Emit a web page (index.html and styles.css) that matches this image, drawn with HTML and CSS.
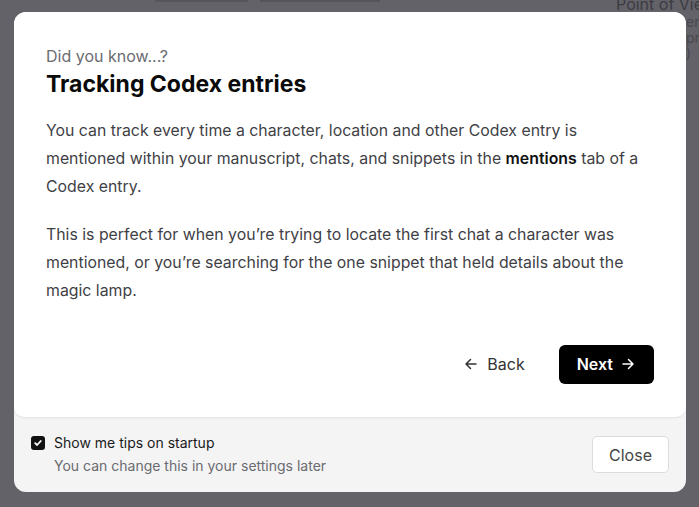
FILE: index.html
```html
<!DOCTYPE html>
<html lang="en">
<head>
    <meta charset="UTF-8">
    <title>Did you know</title>
    <link rel="stylesheet" href="styles.css">
</head>
<body>
    <div class="backdrop">
        <div class="bg-tabs">
            <span class="bg-tab first"></span>
            <span class="bg-tab second"></span>
        </div>
        <div class="bg-side">
            <div class="bg-title">Point of View</div>
            <div class="bg-line">en</div>
            <div class="bg-line">pr</div>
            <div class="bg-line">)</div>
        </div>
    </div>

    <div class="overlay">
        <div class="modal">
            <div class="card">
                <div class="eyebrow">Did you know...?</div>
                <h1>Tracking Codex entries</h1>
                <p>You can track every time a character, location and other Codex entry is mentioned within your manuscript, chats, and snippets in the <strong>mentions</strong> tab of a Codex entry.</p>
                <p>This is perfect for when you’re trying to locate the first chat a character was mentioned, or you’re searching for the one snippet that held details about the magic lamp.</p>

                <div class="actions">
                    <button class="btn-back">
                        <svg width="16" height="16" viewBox="0 0 16 16" fill="none" stroke="currentColor" stroke-width="1.5" stroke-linecap="round" stroke-linejoin="round"><path d="M13 8H3M7.5 3.5L3 8l4.5 4.5"/></svg>
                        Back
                    </button>
                    <button class="btn-next">
                        Next
                        <svg width="16" height="16" viewBox="0 0 16 16" fill="none" stroke="currentColor" stroke-width="1.5" stroke-linecap="round" stroke-linejoin="round"><path d="M3 8h10M8.5 3.5L13 8l-4.5 4.5"/></svg>
                    </button>
                </div>
            </div>

            <div class="footer">
                <label class="tips">
                    <span class="check">
                        <svg width="10" height="10" viewBox="0 0 10 10" fill="none" stroke="#fff" stroke-width="1.8" stroke-linecap="round" stroke-linejoin="round"><path d="M2.2 5.2l1.9 1.8 3.7-4"/></svg>
                    </span>
                    <span class="tips-text">
                        <span class="tips-title">Show me tips on startup</span>
                        <span class="tips-hint">You can change this in your settings later</span>
                    </span>
                </label>
                <button class="btn-close">Close</button>
            </div>
        </div>
    </div>
</body>
</html>
```

FILE: styles.css
```css
* {
    box-sizing: border-box;
}

html, body {
    margin: 0;
    height: 100%;
}

body {
    font-family: Inter, "Noto Sans", sans-serif;
    background-color: #636269;
    overflow: hidden;
}

/* faint page behind the dimmed overlay */
.backdrop {
    position: absolute;
    inset: 0;
    overflow: hidden;
}

.bg-tabs {
    position: absolute;
    top: 0;
    left: 155px;
    display: flex;
    gap: 12px;
}

.bg-tab {
    display: block;
    height: 2px;
    background-color: #56555c;
}

.bg-tab.first {
    width: 93px;
}

.bg-tab.second {
    width: 120px;
}

.bg-side {
    position: absolute;
    top: -6px;
    left: 616px;
    right: 0;
    color: #3c3b42;
    white-space: nowrap;
    overflow: hidden;
}

.bg-title {
    font-size: 16px;
    line-height: 20px;
}

.bg-line {
    padding-left: 70px;
    font-size: 14px;
    line-height: 15.5px;
    color: #48474e;
}

.overlay {
    position: relative;
    padding: 12px 13px 0 14px;
}

.modal {
    background-color: #f4f4f5;
    border-radius: 12px;
    overflow: hidden;
}

.card {
    background-color: #fff;
    border-radius: 0 0 10px 10px;
    box-shadow: 0 1px 2px rgba(0, 0, 0, 0.08);
    padding: 34px 32px 33px 32px;
}

.eyebrow {
    font-size: 16px;
    line-height: 20px;
    color: #6b6b70;
}

h1 {
    margin: 2px 0 17px 0;
    font-size: 23px;
    line-height: 32px;
    font-weight: 700;
    color: #0a0a0a;
}

p {
    margin: 0 0 20px 0;
    font-size: 15.85px;
    line-height: 28px;
    color: #3f3f46;
}

p strong {
    color: #111;
    font-weight: 600;
}

.actions {
    display: flex;
    justify-content: flex-end;
    align-items: center;
    gap: 18px;
    margin-top: 39px;
}

button {
    font-family: inherit;
    cursor: pointer;
}

.btn-back {
    display: flex;
    align-items: center;
    gap: 8px;
    background: none;
    border: none;
    padding: 10px 16px;
    font-size: 16px;
    color: #333;
}

.btn-next {
    display: flex;
    align-items: center;
    gap: 7px;
    height: 39px;
    padding: 0 18px;
    background-color: #000;
    color: #fff;
    border: none;
    border-radius: 6px;
    font-size: 16px;
    font-weight: 600;
}

.footer {
    display: flex;
    justify-content: space-between;
    align-items: center;
    height: 75px;
    padding: 0 17px 0 17px;
}

.tips {
    display: flex;
    align-items: flex-start;
    gap: 9px;
}

.check {
    display: flex;
    align-items: center;
    justify-content: center;
    width: 14px;
    height: 14px;
    margin-top: 2px;
    background-color: #111;
    border-radius: 3px;
}

.tips-text {
    display: flex;
    flex-direction: column;
    gap: 5px;
}

.tips-title {
    font-size: 14px;
    line-height: 18px;
    color: #1a1a1a;
}

.tips-hint {
    font-size: 14px;
    line-height: 18px;
    color: #6b6b70;
}

.btn-close {
    width: 77px;
    height: 37px;
    background-color: #fff;
    border: 1px solid #dcdcdf;
    border-radius: 5px;
    font-size: 16px;
    color: #444;
}
```
